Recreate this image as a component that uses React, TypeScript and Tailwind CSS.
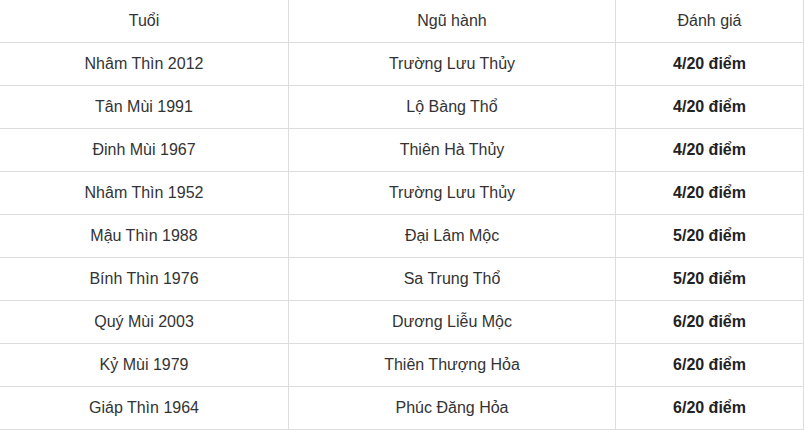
const rows: [string, string, string][] = [
  ["Nhâm Thìn 2012", "Trường Lưu Thủy", "4/20 điểm"],
  ["Tân Mùi 1991", "Lộ Bàng Thổ", "4/20 điểm"],
  ["Đinh Mùi 1967", "Thiên Hà Thủy", "4/20 điểm"],
  ["Nhâm Thìn 1952", "Trường Lưu Thủy", "4/20 điểm"],
  ["Mậu Thìn 1988", "Đại Lâm Mộc", "5/20 điểm"],
  ["Bính Thìn 1976", "Sa Trung Thổ", "5/20 điểm"],
  ["Quý Mùi 2003", "Dương Liễu Mộc", "6/20 điểm"],
  ["Kỷ Mùi 1979", "Thiên Thượng Hỏa", "6/20 điểm"],
  ["Giáp Thìn 1964", "Phúc Đăng Hỏa", "6/20 điểm"],
];

const cell =
  "flex h-[43px] items-center justify-center border-b border-r border-[#dddddd]";

export default function App() {
  return (
    <div className="min-h-screen bg-white font-['Liberation_Sans',Arial,sans-serif] text-[16px] text-[#333333]">
      <div className="grid grid-cols-[289px_327px_188px]">
        <div className={cell}>Tuổi</div>
        <div className={cell}>Ngũ hành</div>
        <div className={cell}>Đánh giá</div>
        {rows.map(([tuoi, nguHanh, danhGia]) => (
          <div key={tuoi} className="contents">
            <div className={cell}>{tuoi}</div>
            <div className={cell}>{nguHanh}</div>
            <div className={`${cell} font-bold text-[#222222]`}>{danhGia}</div>
          </div>
        ))}
      </div>
    </div>
  );
}
